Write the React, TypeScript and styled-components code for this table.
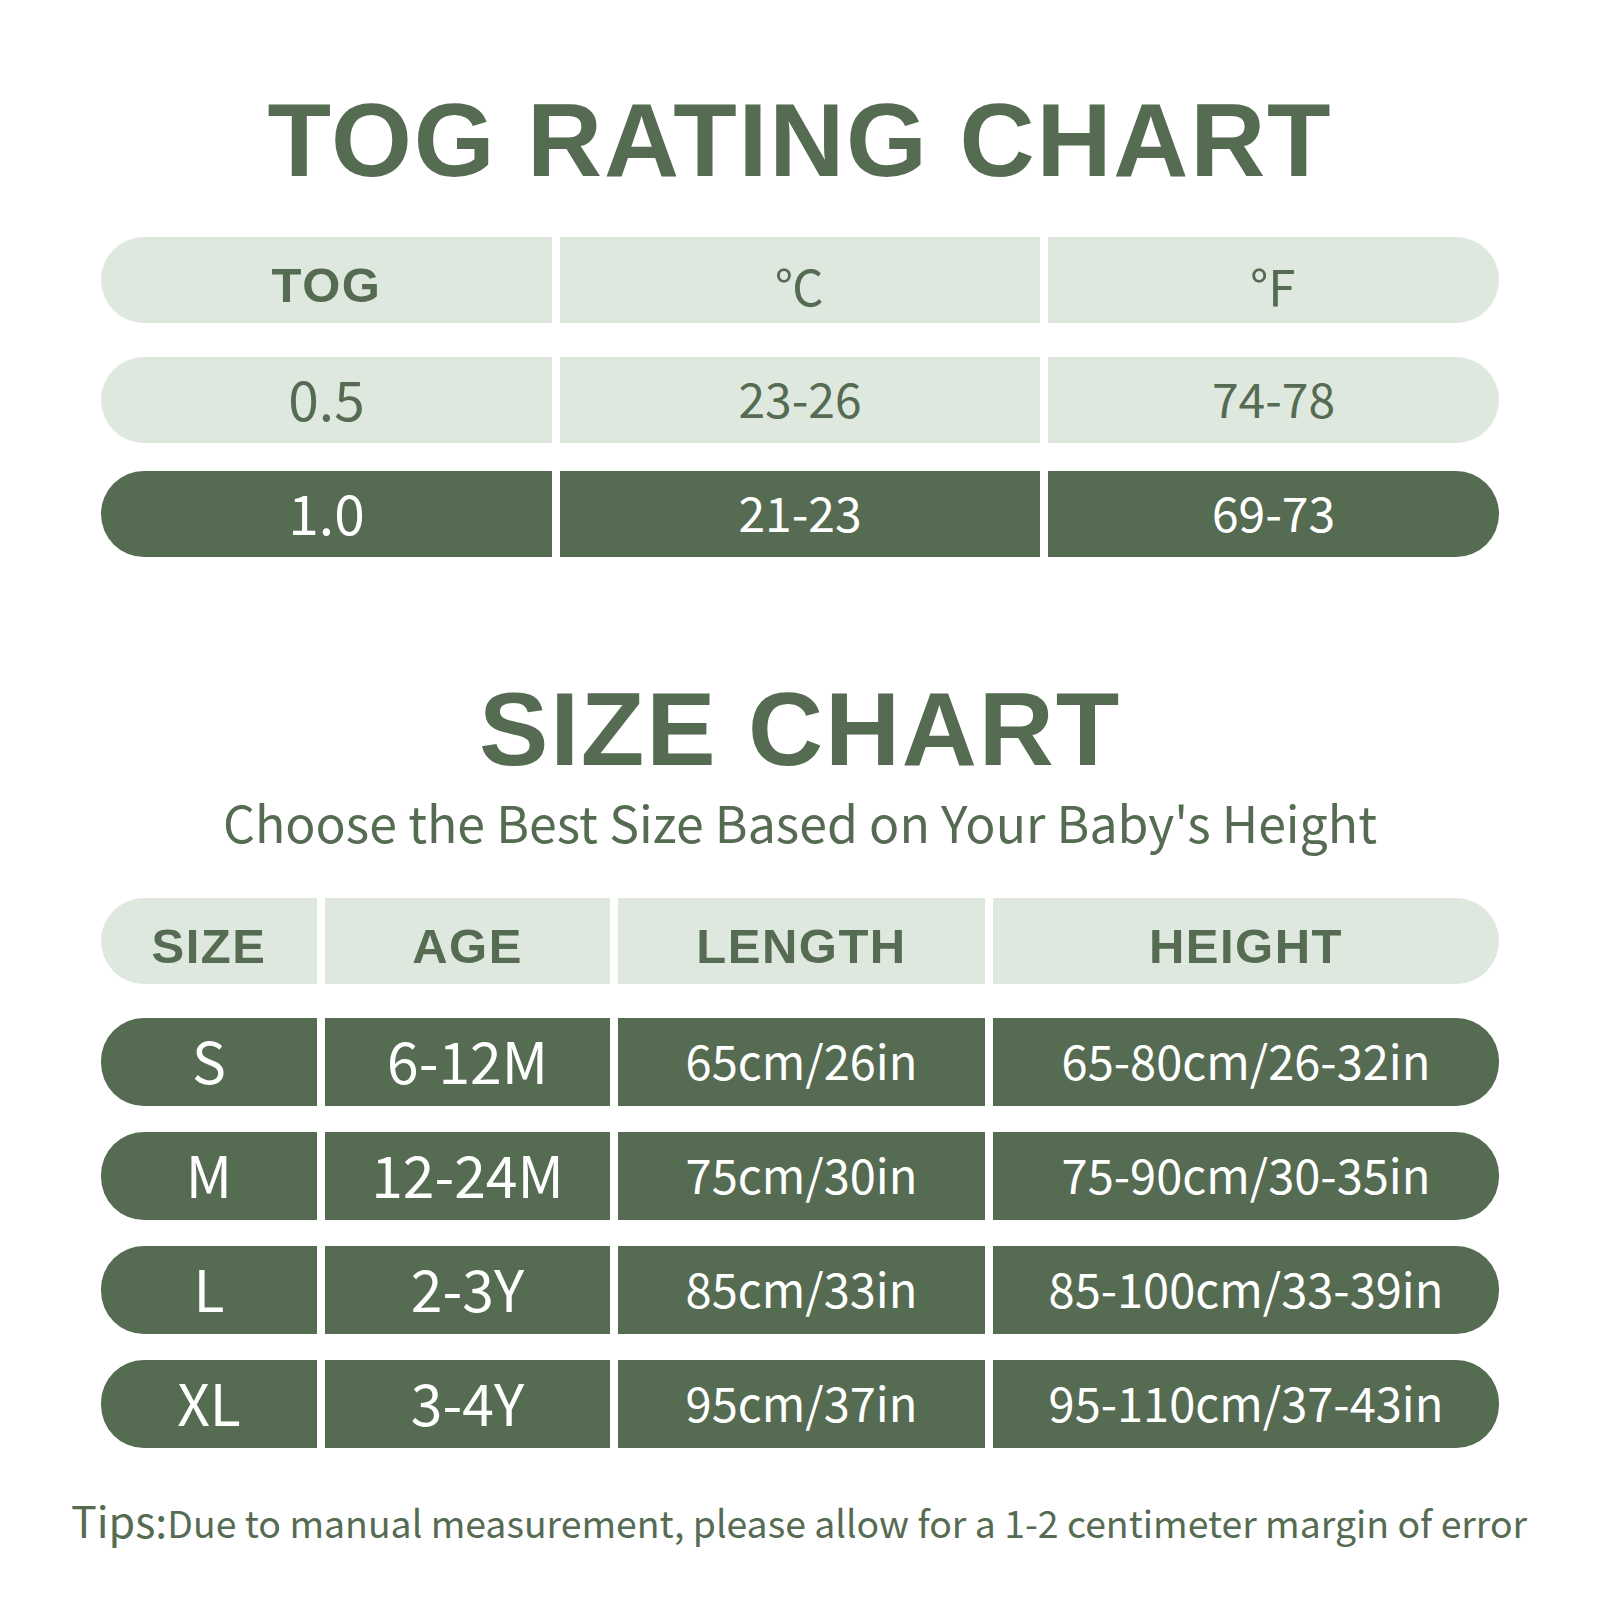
import React from 'react';
import styled, { createGlobalStyle } from 'styled-components';

const GlobalStyle = createGlobalStyle`
  html, body {
    margin: 0;
    padding: 0;
    background: #ffffff;
  }
`;

const DARK = '#556b52';
const LIGHT = '#dfe8df';
const BODY_FONT = `"Noto Sans CJK SC", "Noto Sans", sans-serif`;
const HEAD_FONT = `"Liberation Sans", Arial, sans-serif`;

type Tone = 'head' | 'light' | 'dark';

interface TableRow {
    tone: Tone;
    cells: string[];
}

const togRows: TableRow[] = [
    { tone: 'head', cells: ['TOG', '℃', '℉'] },
    { tone: 'light', cells: ['0.5', '23-26', '74-78'] },
    { tone: 'dark', cells: ['1.0', '21-23', '69-73'] },
];

const sizeRows: TableRow[] = [
    { tone: 'head', cells: ['SIZE', 'AGE', 'LENGTH', 'HEIGHT'] },
    { tone: 'dark', cells: ['S', '6-12M', '65cm/26in', '65-80cm/26-32in'] },
    { tone: 'dark', cells: ['M', '12-24M', '75cm/30in', '75-90cm/30-35in'] },
    { tone: 'dark', cells: ['L', '2-3Y', '85cm/33in', '85-100cm/33-39in'] },
    { tone: 'dark', cells: ['XL', '3-4Y', '95cm/37in', '95-110cm/37-43in'] },
];

// bigCols: how many leading columns use the larger value size
const ChartTable = ({ rows, columns, bigCols, valueSize, bigSize }: { rows: TableRow[]; columns: string; bigCols: number; valueSize: number; bigSize: number }) => (
    <Table>
        {rows.map((row, r) => (
            <Row key={r} columns={columns} first={r === 0}>
                {row.cells.map((cell, c) => (
                    <Cell
                        key={c}
                        tone={row.tone}
                        symbol={cell === '℃' || cell === '℉'}
                        size={c < bigCols ? bigSize : valueSize}
                        edge={c === 0 ? 'left' : c === row.cells.length - 1 ? 'right' : 'none'}
                    >
                        {cell}
                    </Cell>
                ))}
            </Row>
        ))}
    </Table>
);

const App = () => {
    return (
        <Page>
            <GlobalStyle />
            <Title>TOG RATING CHART</Title>
            <ChartTable rows={togRows} columns="451px 480px 451px" bigCols={1} valueSize={48} bigSize={55} />

            <SizeTitle>SIZE CHART</SizeTitle>
            <Subtitle>Choose the Best Size Based on Your Baby's Height</Subtitle>
            <ChartTable rows={sizeRows} columns="216px 285px 367px 506px" bigCols={2} valueSize={47} bigSize={57} />

            <Tips>
                <TipsLabel>Tips:</TipsLabel>Due to manual measurement, please allow for a 1-2 centimeter margin of error
            </Tips>
        </Page>
    );
};

export default App;

const Page = styled.div`
  width: 1600px;
  height: 1600px;
  box-sizing: border-box;
  padding: 88px 101px 0;
  display: flex;
  flex-direction: column;
  align-items: center;
  background: #ffffff;
  color: ${DARK};
`;

const Title = styled.h1`
  margin: 0 0 45px;
  font-family: ${HEAD_FONT};
  font-weight: 700;
  font-size: 104px;
  line-height: 104px;
  letter-spacing: 1.8px;
  color: ${DARK};
`;

const SizeTitle = styled(Title)`
  margin: 120px 0 0;
`;

const Subtitle = styled.div`
  margin: 8px 0 45px;
  font-family: ${BODY_FONT};
  font-size: 50px;
  line-height: 64px;
  color: ${DARK};
`;

const Table = styled.div`
  width: 1398px;
  display: flex;
  flex-direction: column;
  gap: 28px;
`;

const Row = styled.div<{ columns: string; first: boolean }>`
  display: grid;
  grid-template-columns: ${({ columns }) => columns};
  gap: 8px;
  height: 86px;
  margin-bottom: ${({ first }) => (first ? '6px' : '0')};
`;

const Cell = styled.div<{ tone: Tone; symbol: boolean; size: number; edge: 'left' | 'right' | 'none' }>`
  display: flex;
  align-items: center;
  justify-content: center;
  box-sizing: border-box;
  background: ${({ tone }) => (tone === 'dark' ? DARK : LIGHT)};
  color: ${({ tone }) => (tone === 'dark' ? '#ffffff' : DARK)};
  border-radius: ${({ edge }) => (edge === 'left' ? '43px 0 0 43px' : edge === 'right' ? '0 43px 43px 0' : '0')};
  font-family: ${({ tone, symbol }) => (tone === 'head' && !symbol ? HEAD_FONT : BODY_FONT)};
  font-weight: ${({ tone, symbol }) => (tone === 'head' && !symbol ? 700 : 400)};
  font-size: ${({ tone, size }) => (tone === 'head' ? 49 : size)}px;
  letter-spacing: ${({ tone }) => (tone === 'head' ? '1.5px' : '0')};
  padding-top: ${({ tone }) => (tone === 'head' ? '9px' : '0')};
  padding-bottom: ${({ tone }) => (tone === 'head' ? '0' : '6px')};
`;

const Tips = styled.div`
  align-self: flex-start;
  margin: 42px 0 0 -30px;
  font-family: ${BODY_FONT};
  font-size: 37.4px;
  color: ${DARK};
  white-space: nowrap;
`;

const TipsLabel = styled.span`
  font-size: 43px;
`;
